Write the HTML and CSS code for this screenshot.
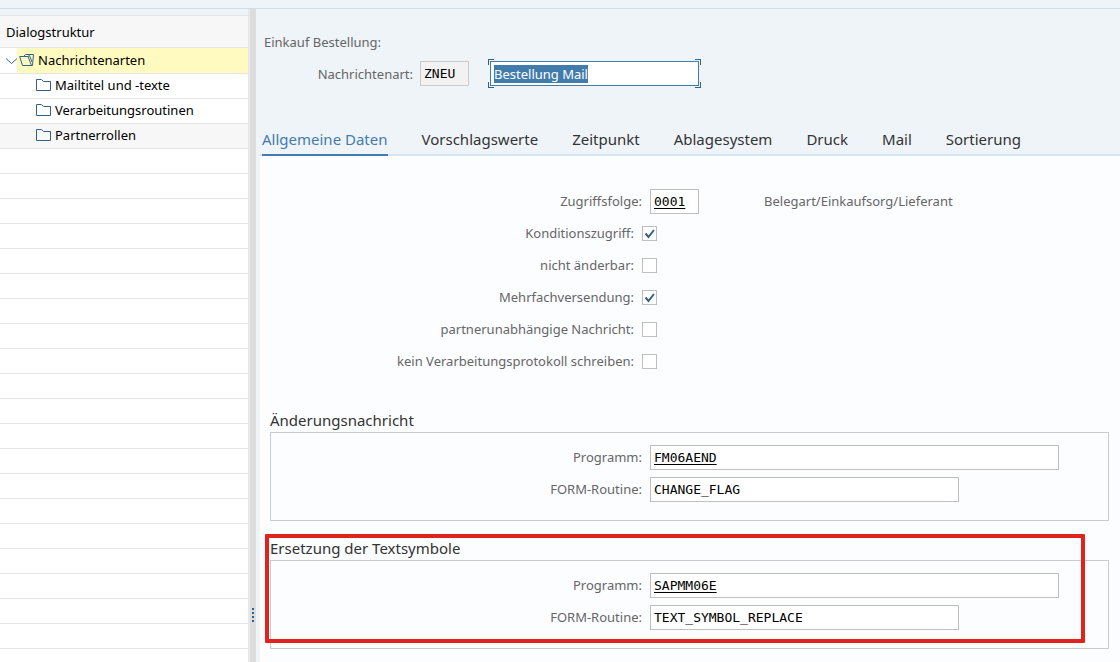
FILE: index.html
```html
<!DOCTYPE html>
<html lang="de">
<head>
<meta charset="utf-8">
<meta name="viewport" content="width=device-width, initial-scale=1">
<title>Nachrichtenarten</title>
<link rel="stylesheet" href="styles.css">
</head>
<body>
<div class="app">
  <div class="topbar"></div>
  <div class="workspace">
    <aside class="sidebar">
      <h2 class="sidebar-title">Dialogstruktur</h2>
      <ul class="tree">
        <li class="node node-root">
          <svg class="chevron" viewBox="0 0 17 25" aria-hidden="true"><path d="M6 10.500L11.500 15.500L17 10.500"/></svg>
          <a class="node-link selected" href="#arten">
            <svg class="folder" viewBox="0 0 17 16" aria-hidden="true"><path d="M.7 4.500H9L12.500 13.500H3.500ZM4.500 4.500L6.500 2.500H14.500L13.500 13.500H12M9 4.500L10.500 3.500L13 10"/></svg>
            Nachrichtenarten
          </a>
        </li>
        <li class="node"><a class="node-link child" href="#mail"><svg class="folder" viewBox="0 0 17 16" aria-hidden="true"><path d="M1.500 13.500V2.500H6.500L8.500 4.500H15.500V13.500Z"/></svg>Mailtitel und -texte</a></li>
        <li class="node"><a class="node-link child" href="#routinen"><svg class="folder" viewBox="0 0 17 16" aria-hidden="true"><path d="M1.500 13.500V2.500H6.500L8.500 4.500H15.500V13.500Z"/></svg>Verarbeitungsroutinen</a></li>
        <li class="node shaded"><a class="node-link child" href="#rollen"><svg class="folder" viewBox="0 0 17 16" aria-hidden="true"><path d="M1.500 13.500V2.500H6.500L8.500 4.500H15.500V13.500Z"/></svg>Partnerrollen</a></li>
      </ul>
    </aside>
    <div class="splitter"><span class="grip"></span></div>
    <main class="main">
      <header class="head">
        <p class="object">Einkauf Bestellung:</p>
        <div class="key-row">
          <label class="key-label" for="art">Nachrichtenart:</label>
          <input class="field short readonly" id="art" value="ZNEU" readonly>
          <span class="focus-frame"><input class="field name" id="name" value="Bestellung Mail" aria-label="Bezeichnung"></span>
        </div>
      </header>
      <nav class="tabs">
        <button class="tab active" type="button">Allgemeine Daten</button>
        <button class="tab" type="button">Vorschlagswerte</button>
        <button class="tab" type="button">Zeitpunkt</button>
        <button class="tab" type="button">Ablagesystem</button>
        <button class="tab" type="button">Druck</button>
        <button class="tab" type="button">Mail</button>
        <button class="tab" type="button">Sortierung</button>
      </nav>
      <form class="panel">
        <div class="rows">
          <div class="row"><label for="folge">Zugriffsfolge:</label><input class="field short linked" id="folge" value="0001"><span class="hint">Belegart/Einkaufsorg/Lieferant</span></div>
          <div class="row check-row"><label for="c1">Konditionszugriff:</label><input class="check" type="checkbox" id="c1" checked></div>
          <div class="row check-row"><label for="c2">nicht änderbar:</label><input class="check" type="checkbox" id="c2"></div>
          <div class="row check-row"><label for="c3">Mehrfachversendung:</label><input class="check" type="checkbox" id="c3" checked></div>
          <div class="row check-row"><label for="c4">partnerunabhängige Nachricht:</label><input class="check" type="checkbox" id="c4"></div>
          <div class="row check-row"><label for="c5">kein Verarbeitungsprotokoll schreiben:</label><input class="check" type="checkbox" id="c5"></div>
        </div>
        <section class="group">
          <h3 class="group-title">Änderungsnachricht</h3>
          <div class="group-box">
            <div class="row"><label for="p1">Programm:</label><input class="field long linked" id="p1" value="FM06AEND"></div>
            <div class="row"><label for="f1">FORM-Routine:</label><input class="field medium" id="f1" value="CHANGE_FLAG"></div>
          </div>
        </section>
        <section class="group">
          <h3 class="group-title">Ersetzung der Textsymbole</h3>
          <div class="group-box">
            <div class="row"><label for="p2">Programm:</label><input class="field long linked" id="p2" value="SAPMM06E"></div>
            <div class="row"><label for="f2">FORM-Routine:</label><input class="field medium" id="f2" value="TEXT_SYMBOL_REPLACE"></div>
          </div>
          <div class="marker"></div>
        </section>
      </form>
    </main>
  </div>
</div>
<script src="app.js"></script>
</body>
</html>
```

FILE: styles.css
```css
* { box-sizing: border-box; }

body {
  margin: 0;
  background: #eff4f8;
  color: #000;
  font: 13px/16px "Noto Sans", "Open Sans", sans-serif;
}

h2, h3, p, ul { margin: 0; padding: 0; font-weight: 400; }
ul { list-style: none; }

.app { display: flex; flex-direction: column; min-height: 100vh; }
.topbar { height: 9px; border-bottom: 1px solid #cbe0ee; }
.workspace { display: flex; flex: 1; }

/* Tree */
.sidebar { display: flex; flex-direction: column; width: 248px; padding-top: 6px; }
.sidebar-title {
  height: 33px;
  padding-left: 6px;
  border-top: 1px solid #e5e5e5;
  border-bottom: 1px solid #e5e5e5;
  background: #f7f7f7;
  font-size: 13px;
  line-height: 32px;
}
.tree {
  flex: 1;
  background: repeating-linear-gradient(#fff 0 24px, #e5e5e5 24px 25px) 0 1px;
}
.node { display: flex; height: 25px; border-bottom: 1px solid #e5e5e5; background: #fff; }
.node-root { height: 26px; }
.node.shaded { background: #f7f7f7; }
.node-link {
  display: flex;
  flex: 1;
  align-items: center;
  padding-bottom: 2px;
  color: #000;
  text-decoration: none;
}
.selected { background: #fffbc0; }
.selected .folder { margin: 0 2px; }
.child { padding-left: 35px; }
.child .folder { margin-right: 3px; }
.chevron { width: 17px; height: 25px; }
.folder { width: 17px; height: 16px; }
.chevron, .folder { flex: none; fill: none; stroke: #346187; stroke-width: 1; }

.splitter {
  display: flex;
  align-items: flex-end;
  justify-content: flex-end;
  width: 8px;
  padding: 0 2px 40px 0;
  border-left: 2px solid #e8e8e8;
  background: #dcdcdc;
}
.grip { width: 2px; height: 14px; background: repeating-linear-gradient(#346187 0 2px, transparent 2px 4px); }

/* Header */
.main { display: flex; flex: 1; flex-direction: column; min-width: 0; padding-left: 4px; }
.head { padding: 25px 0 0 4px; color: #666; }
.key-row { display: flex; align-items: center; margin-top: 9px; }
.key-label { width: 149px; text-align: right; }

.field {
  height: 25px;
  padding: 0 3px;
  border: 1px solid #bfbfbf;
  border-radius: 0;
  outline: 0;
  background: #fff;
  color: #000;
  font: 13px/16px "DejaVu Sans Mono", "Liberation Mono", monospace;
}
.short { width: 49px; }
.medium { width: 309px; }
.long { width: 409px; }
.linked { text-decoration: underline; text-underline-offset: 2px; }
.readonly { margin-left: 7px; border-color: #c8cacc; background: #f2f2f2; }
.name { display: block; width: 209px; border-color: #427cac; font: 13px/16px "Noto Sans", "Open Sans", sans-serif; }
.name::selection { background: #427cac; color: #fff; }

/* Corner brackets around the focused field */
.focus-frame {
  --c: linear-gradient(#346187, #346187);
  margin-left: 19px;
  padding: 2px;
  background:
    var(--c) 0 0 / 6px 1px, var(--c) 0 0 / 1px 6px,
    var(--c) 100% 0 / 6px 1px, var(--c) 100% 0 / 1px 6px,
    var(--c) 0 100% / 6px 1px, var(--c) 0 100% / 1px 6px,
    var(--c) 100% 100% / 6px 1px, var(--c) 100% 100% / 1px 6px;
  background-repeat: no-repeat;
}

/* Tabs */
.tabs {
  display: flex;
  gap: 34px;
  margin-top: 36px;
  padding-left: 2px;
  box-shadow: inset 0 -2px #d9e4f1;
}
.tab {
  padding: 5px 0 4px;
  border: 0;
  border-bottom: 2px solid transparent;
  background: none;
  color: #333;
  font: 15px/21px "Noto Sans", "Open Sans", sans-serif;
}
.tab.active { border-color: #427cac; color: #427cac; }

/* Form */
.panel { flex: 1; padding: 29px 11px 0 10px; background: #fcfdff; color: #666; }
.row {
  display: grid;
  grid-template-columns: 372px auto 1fr;
  gap: 8px;
  align-items: center;
  height: 32px;
}
.row label { text-align: right; }
.check-row { grid-template-columns: 364px auto 1fr; }
.hint { margin-left: 57px; }
.check {
  width: 15px;
  height: 15px;
  margin: 0;
  border: 1px solid #bfbfbf;
  appearance: none;
  background: #fff;
}
.check:checked {
  background: #fff url("data:image/svg+xml,%3Csvg xmlns='http://www.w3.org/2000/svg' viewBox='0 0 13 13'%3E%3Cpath d='M2.500 6.500l3 3.500L11 3' fill='none' stroke='%23346187' stroke-width='2'/%3E%3C/svg%3E");
}
.group { position: relative; margin-top: 16px; }
.rows + .group { margin-top: 32px; }
.group-title { color: #333; font-size: 15px; line-height: 23px; }
.group-box { height: 89px; padding-top: 8px; border: 1px solid #c8cacc; }
.group-box .row { grid-template-columns: 371px auto 1fr; }
.marker {
  position: absolute;
  inset: -3px 24px 6px -5px;
  border: 4px solid #e0231f;
  border-radius: 1px;
  pointer-events: none;
}
```

FILE: app.js
```js
const nameField = document.getElementById("name");
nameField.focus();
nameField.select();
```
